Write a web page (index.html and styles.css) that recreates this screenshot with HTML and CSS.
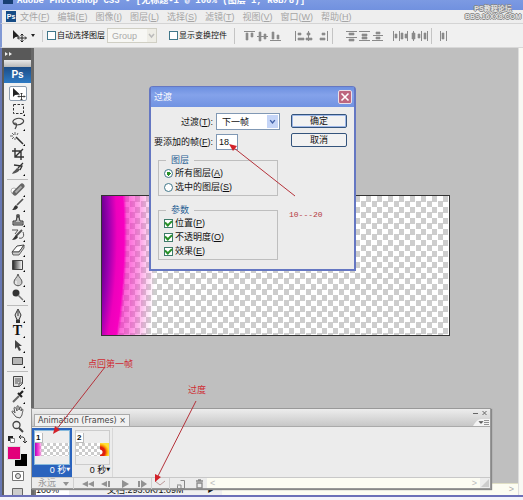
FILE: index.html
```html
<!DOCTYPE html>
<html lang="zh-CN">
<head>
<meta charset="utf-8">
<title>Adobe Photoshop CS3</title>
<link rel="stylesheet" href="styles.css">
</head>
<body>
<div class="app">
  <header class="titlebar"><span class="title-icon"></span><span class="title-text">Adobe Photoshop CS3 - [无标题-1 @ 100% (图层 1, RGB/8)]</span></header>
  <nav class="menubar">
    <span class="ps-small">Ps</span>
    <a href="#">文件(<u>F</u>)</a><a href="#">编辑(<u>E</u>)</a><a href="#">图像(<u>I</u>)</a><a href="#">图层(<u>L</u>)</a><a href="#">选择(<u>S</u>)</a><a href="#">滤镜(<u>T</u>)</a><a href="#">视图(<u>V</u>)</a><a href="#">窗口(<u>W</u>)</a><a href="#">帮助(<u>H</u>)</a>
  </nav>
  <div class="options">
    <svg class="opt-move" viewBox="0 0 24 14"><path d="M1 1v9l2.500-2 4-.5z" fill="#222"/><path d="M10 5v8M6 9h8M8.500 6.500L10 5l1.500 1.500M8.500 11.500L10 13l1.500-1.500M7 7.500L5.500 9 7 10.500M13 7.500L14.500 9 13 10.500" fill="none" stroke="#222"/><path d="M19 5h4l-2 3z" fill="#222"/></svg>
    <label class="opt-check first"><input type="checkbox" class="tick">自动选择图层</label>
    <select class="group-select" aria-label="自动选择" disabled><option>Group</option></select>
    <svg class="group-arrow" viewBox="0 0 9 13"><path d="M2 5l2.500 3L7 5" fill="none" stroke="#bbb" stroke-width="1.500"/></svg>
    <label class="opt-check second"><input type="checkbox" class="tick">显示变换控件</label>
    <svg class="aligns" viewBox="0 0 215 16" fill="none" stroke="#8a8a8a">
      <path d="M1.500 0v16M99.500 0v16M198.500 0v16" stroke="#c4c4c4"/>
      <path d="M11 3.500h11M24 8.500h11M37 12.500h11M62.500 3v10M75.500 3v10M94.500 3v10M113 3.500h11M113 9.500h11M126 3.500h11M126 12.500h11M140 7.500h10M139 12.500h11M160.500 3v10M166.500 3v10M174.500 3v10M180.500 3v10M188.500 3v10M194.500 3v10M207.500 3v10M213.500 3v10"/>
      <path d="M13 5h2v7h-2zM18 5h2v4h-2zM26 4h2v9h-2zM31 6h2v5h-2zM39 4h2v7h-2zM44 7h2v4h-2zM65 5h3v2h-3zM65 10h6v2h-6zM74 5h3v2h-3zM73 10h6v2h-6zM89 5h3v2h-3zM87 10h5v2h-5zM116 5h5v2h-5zM116 11h5v2h-5zM129 6h5v2h-5zM129 9h5v2h-5zM143 4h4v2h-4zM143 9h4v2h-4zM162 6h2v4h-2zM168 5h2v6h-2zM172 6h2v4h-2zM179 5h3v6h-3zM185 6h2v4h-2zM191 5h2v6h-2zM209 5h2v6h-2z" fill="#8a8a8a" stroke-width=".6"/>
    </svg>
  </div>
  <div class="watermark"><span>PS教程论坛</span><span>BBS.16XX8.COM</span></div>

  <main class="workspace">
    <aside class="tools">
      <div class="tools-head"><svg viewBox="0 0 8 6"><path d="M0 1l3 2-3 2zM4 1l3 2-3 2z" fill="#eee"/></svg></div>
      <div class="tools-body">
        <div class="grip"></div>
        <div class="ps-logo">Ps</div>
        <div class="group">
          <button class="tool active" aria-label="移动"><svg viewBox="0 0 16 14"><path d="M3 1v9l2-2 5-.5z" fill="#222"/><path d="M11.500 6v7M8 9.500h7M10.500 7l1-1 1 1M10.500 12l1 1 1-1M9 8.500l-1 1 1 1M14 8.500l1 1-1 1" fill="none" stroke="#222" stroke-width=".8"/></svg></button>
          <button class="tool" aria-label="选框"><svg viewBox="0 0 16 14"><path d="M3.500 2.500h10v9h-10z" fill="none" stroke="#333" stroke-dasharray="2.500 1.500"/><path d="M13 14h2v-2z"/></svg></button>
          <button class="tool" aria-label="套索"><svg viewBox="0 0 16 14"><path d="M4 7C0 3 8 0 12 2c4 2 0 6-5 6-3 0-4-2-2-2s2 3 0 6" fill="none" stroke="#444" stroke-width="1.200"/><path d="M13 14h2v-2z"/></svg></button>
          <button class="tool" aria-label="魔棒"><svg viewBox="0 0 16 14"><path d="M6 5l7 7" stroke="#333" stroke-width="1.600"/><path d="M5 0v3M0 4h3M2 1l2 2M8 1L7 3M2 7l2-2M5 6v2" stroke="#666" fill="none"/><path d="M13 14h2v-2z"/></svg></button>
          <button class="tool" aria-label="裁剪"><svg viewBox="0 0 16 14"><path d="M5 1v9h9M2 4h9v9M5 10l8-8" fill="none" stroke="#333" stroke-width="1.400"/></svg></button>
          <button class="tool" aria-label="切片"><svg viewBox="0 0 16 14"><path d="M2 12c1-3 4-4 5-6l3 1c-1 3-4 4-8 5z" fill="#555"/><path d="M8 6l5-5M4 3l8 1-2 4" fill="none" stroke="#333" stroke-width="1.300"/><path d="M13 14h2v-2z"/></svg></button>
        </div>
        <div class="group">
          <button class="tool" aria-label="修复画笔"><svg viewBox="0 0 16 14"><circle cx="4" cy="8" r="3" fill="#fff" stroke="#999" stroke-width=".7"/><path d="M5 10l7-7" stroke="#666" stroke-width="5" stroke-linecap="round"/><path d="M5.500 9.500l6-6" stroke="#aaa" stroke-width="2"/><path d="M13 14h2v-2z"/></svg></button>
          <button class="tool" aria-label="画笔"><svg viewBox="0 0 16 14"><path d="M7 7l6-6" stroke="#555" stroke-width="1.700"/><path d="M2 12c2-1 1-3 4-5l2 2c-1 3-4 3-6 3z" fill="#333"/><path d="M13 14h2v-2z"/></svg></button>
          <button class="tool" aria-label="图章"><svg viewBox="0 0 16 14"><circle cx="8" cy="3" r="2" fill="#555"/><path d="M7 4h2l1 4h3v4H3V8h3z" fill="#bbb" stroke="#333"/><path d="M4 10h8" stroke="#444"/><path d="M13 14h2v-2z"/></svg></button>
          <button class="tool" aria-label="历史画笔"><svg viewBox="0 0 16 14"><path d="M6 8l6-6" stroke="#555" stroke-width="2"/><path d="M2 12l4-5 2 2c-1 2-3 3-6 3z" fill="#333"/><path d="M2 2h6l-3 4M13 4c2 5-1 7-4 6" fill="none" stroke="#555"/><path d="M13 14h2v-2z"/></svg></button>
          <button class="tool" aria-label="橡皮擦"><svg viewBox="0 0 16 14"><path d="M2 9l5-6 7-1-5 7z" fill="#fff" stroke="#444"/><path d="M2 9l7 0 5-7v3L9 12H3z" fill="#ccc" stroke="#444" stroke-width=".8"/><path d="M13 14h2v-2z"/></svg></button>
          <button class="tool" aria-label="渐变"><svg viewBox="0 0 16 14"><defs><linearGradient id="gr"><stop stop-color="#222"/><stop offset="1" stop-color="#fff"/></linearGradient></defs><path d="M2.500 2.500h10v9h-10z" fill="url(#gr)" stroke="#444"/><path d="M13 14h2v-2z"/></svg></button>
          <button class="tool" aria-label="模糊"><svg viewBox="0 0 16 14"><path d="M8 1c1 4 4 5 4 8 0 5-8 5-8 0 0-3 3-4 4-8z" fill="#ccc" stroke="#555"/><path d="M6 8v3" stroke="#fff"/><path d="M13 14h2v-2z"/></svg></button>
          <button class="tool" aria-label="减淡"><svg viewBox="0 0 16 14"><circle cx="6" cy="5" r="3.500" fill="#333"/><path d="M8 7l5 5" stroke="#777" stroke-width="1.500"/><path d="M13 14h2v-2z"/></svg></button>
        </div>
        <div class="group">
          <button class="tool" aria-label="钢笔"><svg viewBox="0 0 16 14"><path d="M8 0l3 6-2 5H7L5 6z" fill="#ddd" stroke="#333"/><path d="M8 2v5" stroke="#333"/><path d="M6 11h4v3H6z" fill="#333"/><path d="M13 14h2v-2z"/></svg></button>
          <button class="tool type-tool" aria-label="文字"><span>T</span><svg viewBox="0 0 16 14"><path d="M13 14h2v-2z"/></svg></button>
          <button class="tool" aria-label="路径选择"><svg viewBox="0 0 16 14"><path d="M5 1v9l2-2 2 4 2-1-2-4 3 0z" fill="#444"/><path d="M13 14h2v-2z"/></svg></button>
          <button class="tool" aria-label="矩形"><svg viewBox="0 0 16 14"><path d="M2.500 3.500h10v7h-10z" fill="#b5b5b5" stroke="#444"/><path d="M13 14h2v-2z"/></svg></button>
        </div>
        <div class="group last">
          <button class="tool" aria-label="注释"><svg viewBox="0 0 16 14"><path d="M3.500 1.500h9v7l-3 3h-6z" fill="#ddd" stroke="#444"/><path d="M5 4h6M5 6h6M5 8h3M9 12V8h4" fill="none" stroke="#555"/><path d="M13 14h2v-2z"/></svg></button>
          <button class="tool" aria-label="吸管"><svg viewBox="0 0 16 14"><path d="M3 12l6-6" stroke="#666" stroke-width="2"/><path d="M8 3l4 4M9 5l4-4" stroke="#222" stroke-width="2.200"/><path d="M13 14h2v-2z"/></svg></button>
          <button class="tool" aria-label="抓手"><svg viewBox="0 0 16 14"><path d="M6 12L2 7c0-2 2-1 3 1L4 3c1-2 2 0 3 3V1c2-1 2 1 2 4l1-3c2 0 1 2 1 4l1-2c2 0 0 4 0 6l-2 3z" fill="#eee" stroke="#555"/></svg></button>
          <button class="tool" aria-label="缩放"><svg viewBox="0 0 16 14"><circle cx="6.500" cy="5" r="3.500" fill="#eee" stroke="#444" stroke-width="1.300"/><path d="M9 8l4 4" stroke="#444" stroke-width="2"/></svg></button>
        </div>
        <svg class="swatches" viewBox="0 0 22 33"><path d="M2 2h5v5H2z" fill="#222"/><path d="M4.500 4.500h4v4h-4z" fill="#fff" stroke="#888"/><path d="M14 3h3q2 0 2 5M15 1l-2 2 2 2M17 7l2 2 2-2" fill="none" stroke="#333"/><path d="M9 20h12v12H9z" fill="#000"/><path d="M1.500 12.500h13v13h-13z" fill="#e2007a" stroke="#ddd"/></svg>
        <svg class="mask" viewBox="0 0 16 12"><path d="M2.500 1.500h11v9h-11z" fill="#fff" stroke="#777"/><circle cx="8" cy="6" r="2.500" fill="#ddd" stroke="#555"/></svg>
        <svg class="screen" viewBox="0 0 16 8"><path d="M2.500 1.500h10v7h-10z" fill="#ccc" stroke="#666"/></svg>
      </div>
    </aside>
    <section class="stage">
      <div class="canvas"><div class="paint"></div></div>
      <footer class="status"><span class="zoom">100%</span><span class="docsize">文档:293.0K/1.09M</span><span class="play">▶</span><span class="hscroll">&gt;</span></footer>
    </section>
    <div class="vscroll"></div>
  </main>
  <div class="base"></div>

  <form class="dialog">
    <div class="dialog-title"><span>过渡</span><button type="button" class="close" aria-label="关闭"><svg viewBox="0 0 12 12"><path d="M2.500 2.500l7 7M9.500 2.500l-7 7" stroke="#fff" stroke-width="1.600"/></svg></button></div>
    <div class="dialog-body">
      <div class="fields">
        <div class="row"><label for="tween">过渡(<u>T</u>):</label><span class="select-wrap"><select id="tween"><option>下一帧</option></select><svg viewBox="0 0 11 14"><path d="M3 5.500l2.500 3 2.500-3" fill="none" stroke="#4161a8" stroke-width="1.500"/></svg></span></div>
        <div class="row"><label for="count">要添加的帧(<u>F</u>):</label><input id="count" type="text" value="18"></div>
        <fieldset class="layers"><legend>图层</legend>
          <label><input type="radio" name="layer" checked><span>所有图层(<u>A</u>)</span></label>
          <label><input type="radio" name="layer"><span>选中的图层(<u>S</u>)</span></label>
        </fieldset>
        <fieldset class="params"><legend>参数</legend>
          <label><input type="checkbox" class="tick" checked><span>位置(<u>P</u>)</span></label>
          <label><input type="checkbox" class="tick" checked><span>不透明度(<u>O</u>)</span></label>
          <label><input type="checkbox" class="tick" checked><span>效果(<u>E</u>)</span></label>
        </fieldset>
      </div>
      <div class="actions"><button type="button" class="ok">确定</button><button type="button">取消</button></div>
    </div>
  </form>

  <section class="panel">
    <div class="panel-head">
      <div class="tab">Animation (Frames) <span>×</span></div>
      <svg class="panel-ctl" viewBox="0 0 20 18"><path d="M3 5.500h5M12.500 3l4 4M16.500 3l-4 4" stroke="#666" fill="none"/><path d="M3 18q4-7 8-7h9v7z" fill="#f4f4f4"/><path d="M9 13.500h4l-2 2zM14 12.500h5M14 14.500h5M14 16.500h5" stroke="#666" stroke-width=".7" fill="#444"/></svg>
    </div>
    <div class="frames">
      <div class="frame selected"><div class="thumb"><b>1</b><div class="strip pink"></div></div><div class="delay">0 秒<i>▼</i></div></div>
      <div class="frame"><div class="thumb"><b>2</b><div class="strip fire"></div></div><div class="delay">0 秒<i>▼</i></div></div>
    </div>
    <div class="controls">
      <span class="loop">永远</span>
      <svg class="transport" viewBox="0 0 145 11" fill="#929292"><path d="M1 4h6l-3 4zM20 6l6-3v6zM26 6l6-3v6zM39 6l6-3v6zM46 3h2v6h-2zM60 2l7 4-7 4zM76 3h2v6h-2zM79 2l6 4-6 4z"/><path d="M11.500 0v11M89.500 0v11M107.500 0v11" stroke="#d0d0d0"/><path d="M93 3l5 4 5-4" stroke="#b99" fill="none"/><path d="M115.500 7.500v3h7v-8h-4M115 7h4v3" fill="none" stroke="#888"/><path d="M134 3h7M136 2h3M135 5h5v5h-5z" fill="none" stroke="#888" stroke-width="1.300"/></svg>
      <div class="track"><span>&lt;</span><span>&gt;</span></div>
      <svg class="resize" viewBox="0 0 10 10"><path d="M1 9l8-8v8z" fill="#ccc"/></svg>
    </div>
  </section>

  <svg class="arrows" viewBox="0 0 523 500" fill="#d3222a" stroke="#b5323a"><path d="M105 367L56 430M196 401L158 476M295 196L234 148" fill="none"/><path d="M53 434l2-8 5 4zM155 482l0-8 6 3zM229 144l8 2-4 5z" stroke="none"/></svg>
  <span class="note note-range">10---20</span>
  <span class="note note-first">点回第一帧</span>
  <span class="note note-tween">过度</span>
</div>
</body>
</html>
```
FILE: styles.css
```css
* { box-sizing: border-box; }
body { margin: 0; font: 9px/12px "Liberation Sans", "Noto Sans CJK SC", sans-serif; color: #111; }
button, input, select { font: inherit; color: inherit; margin: 0; padding: 0; }
svg { display: block; }
.app { position: relative; display: flex; flex-direction: column; height: 100vh; overflow: hidden; background: #ededed; }

.titlebar { display: flex; height: 10px; flex: none; overflow: hidden; background: linear-gradient(#7c9ae2, #7191df); color: #fff; padding-left: 3px; gap: 4px; }
.title-icon { width: 10px; height: 4px; background: #173f74; }
.title-text { font: bold 9px/12px "Liberation Mono", "Noto Sans CJK SC", monospace; margin-top: -5px; white-space: nowrap; }
.menubar { display: flex; align-items: center; gap: 8px; flex: none; height: 14px; padding-left: 4px; border-left: 2px solid #8199d5; border-bottom: 1px solid #d4d4d4; background: #eee; }
.menubar a { color: #a5a5a5; text-decoration: none; white-space: nowrap; }
.ps-small { width: 10px; height: 11px; margin-right: -4px; background: #164c86; color: #fff; font: bold 7px/11px "Liberation Sans", sans-serif; text-align: center; }
.options { display: flex; align-items: center; flex: none; height: 24px; padding-left: 10px; border-left: 2px solid #8199d5; background: #f0f0f0; border-bottom: 1px solid #d8d8d8; font-size: 8px; }
.opt-move { width: 24px; height: 14px; }
.opt-check { display: flex; align-items: center; gap: 1px; white-space: nowrap; }
.first { margin-left: 6px; padding-left: 4px; border-left: 1px solid #ccc; }
.group-select { appearance: none; width: 50px; height: 15px; margin: 0 0 0 2px; padding-left: 4px; border: 1px solid #d0cfc4; background: #f7f7f4; color: #aaa; font-size: 9px; opacity: 1; }
.group-arrow { width: 9px; height: 13px; margin-left: -10px; background: #eeede6; }
.second { padding-left: 13px; }
.aligns { width: 215px; height: 16px; margin-left: 6px; }
.tick { appearance: none; width: 9px; height: 9px; border: 1px solid #40778a; background: #fff; display: grid; place-items: center; flex: none; }
.tick:checked { border-color: #3d7a6a; }
.tick:checked::after { content: ""; width: 5px; height: 3px; border-left: 2px solid #289028; border-bottom: 2px solid #289028; transform: rotate(-45deg); margin-bottom: 1px; }
.watermark { position: absolute; right: 2px; top: 5px; display: flex; flex-direction: column; align-items: center; font: bold 7px/8px "Liberation Sans", "Noto Sans CJK SC", sans-serif; color: #e4e4e4; text-shadow: 1px 0 #888, -1px 0 #888, 0 1px #888, 0 -1px #888; }

.workspace { display: flex; flex: 1; min-height: 0; background: #bfbfbf; }
.tools { width: 34px; flex: none; display: flex; flex-direction: column; border-left: 2px solid #6878b4; border-right: 3px solid #686868; background: #5b5b5b; overflow: hidden; }
.tools-head { flex: none; height: 12px; padding: 3px; background: #595959; }
.tools-head svg { width: 8px; height: 6px; }
.tools-body { flex: 1; margin-left: 2px; background: #f0f0f0; min-height: 0; }
.grip { height: 7px; background: linear-gradient(#e8e8e8, #b8b8b8); }
.ps-logo { height: 16px; margin-bottom: 3px; background: linear-gradient(#1c4c86, #2d7ac4); color: #fff; font: bold 10px/16px "Liberation Sans", sans-serif; text-align: center; }
.group { display: flex; flex-direction: column; align-items: center; padding-bottom: 3px; margin: 0 3px 2px; border-bottom: 1px solid #bbb; }
.last { padding: 0; margin-bottom: 0; border: 0; }
.tool { display: grid; place-items: center; width: 18px; height: 15px; border: 0; background: none; }
.tool svg { width: 16px; height: 14px; }
.tool.active { border: 1px solid #8c9cae; border-radius: 2px; background: #fff; }
.type-tool { font: bold 14px/14px "Liberation Serif", serif; }
.type-tool svg, .type-tool span { grid-area: 1 / 1; }
.swatches { width: 22px; height: 33px; margin-left: 2px; }
.mask { width: 16px; height: 12px; margin: 3px auto 5px; }
.screen { width: 16px; height: 8px; margin: 0 auto; }
.stage { flex: 1; min-width: 0; display: flex; flex-direction: column; }
.canvas { height: 141px; margin: 147px 68px auto 67px; border: 1px solid #333; background: conic-gradient(#fff 25%, #cdcdcd 0 50%, #fff 0 75%, #cdcdcd 0) 0 0 / 11px 11px; }
.paint { width: 54px; height: 100%; background: radial-gradient(ellipse 100px 300px at -50px 40px, #66008c 50%, #9c00b0 57%, #ee00bc 65%, #f800c0 72%, rgba(250, 20, 195, .65) 75%, rgba(255, 60, 205, .5) 87%, rgba(255, 110, 215, .3) 96%, transparent 104%); }
.status { display: flex; align-items: end; flex: none; height: 12px; background: #efefef; white-space: nowrap; line-height: 9px; }
.zoom { width: 35px; background: #fff; border-left: 2px solid #777; }
.docsize { margin-left: 38px; }
.play { margin-left: 24px; font-size: 6px; }
.hscroll { flex: 1; height: 12px; margin-left: 8px; padding-right: 4px; background: #fcfcf2; border-top: 1px solid #e0dfc5; color: #aaa; line-height: 11px; text-align: right; }
.vscroll { width: 5px; background: #f8f8f3; border-left: 1px solid #ddd; }
.base { flex: none; height: 5px; border-top: 2px solid #6c70b8; background: #f3f3fa; }

.dialog { position: absolute; left: 149px; top: 86px; width: 207px; border: 2px solid #6577c2; border-top-width: 1px; border-radius: 4px 4px 0 0; background: #ececec; }
.dialog-title { display: flex; align-items: center; justify-content: space-between; height: 20px; padding: 0 2px 0 3px; background: linear-gradient(#6d90e0, #84a2ea 40%, #7193e2); color: #fff; }
.close { width: 14px; height: 14px; border: 1px solid #eadfe8; border-radius: 2px; background: #bd667f; }
.close svg { width: 12px; height: 12px; }
.dialog-body { display: flex; justify-content: space-between; padding: 6px 7px 9px; }
.fields { width: 122px; }
.row { display: flex; align-items: center; justify-content: flex-end; gap: 3px; margin-bottom: 4px; white-space: nowrap; }
.select-wrap { position: relative; width: 64px; }
.select-wrap select { appearance: none; display: block; width: 100%; height: 17px; padding-left: 5px; border: 1px solid #8098b4; border-radius: 0; background: #fff; }
.select-wrap svg { position: absolute; right: 2px; top: 2px; width: 11px; height: 13px; background: #c5d5f7; pointer-events: none; }
.row input { width: 22px; height: 16px; margin-right: 42px; padding-left: 2px; border: 1px solid #8098b4; background: #fff; }
fieldset { width: 120px; min-width: 0; margin: 4px 0 0; padding: 0 5px 1px; border: 1px solid #bebebe; }
legend { padding: 0 5px; margin-left: 2px; color: #285f93; }
fieldset label { display: flex; align-items: center; gap: 2px; height: 14px; }
.params { margin-top: 8px; }
input[type="radio"] { appearance: none; width: 9px; height: 9px; border: 1px solid #40778a; border-radius: 50%; background: #fff; }
input[type="radio"]:checked { background: radial-gradient(circle, #289028 0 2px, #fff 2px); }
.actions { display: flex; flex-direction: column; gap: 5px; width: 56px; margin: 1px 0 0; }
.actions button { height: 14px; border: 1px solid #34547c; border-radius: 2px; background: #f2f2f2; line-height: 11px; }
.actions .ok { box-shadow: inset 0 0 0 1px #9fb8e8; }

.panel { position: absolute; left: 31px; right: 32px; top: 408px; border: 1px solid #999; background: #ececec; box-shadow: 1px 1px 1px #888; }
.panel-head { display: flex; align-items: end; justify-content: space-between; height: 18px; background: linear-gradient(#ededed, #c7c7c7); border-bottom: 1px solid #aaa; }
.tab { height: 12px; margin-left: 2px; padding: 0 3px; border: 1px solid #aaa; border-bottom: 0; background: #f1f1f1; color: #444; font: 8px/12px "DejaVu Sans", sans-serif; white-space: nowrap; }
.panel-ctl { width: 20px; height: 18px; }
.frames { display: flex; gap: 1px; height: 50px; padding-top: 1px; }
.frame { width: 40px; padding: 2px; border-right: 1px solid #d8d8d8; }
.frame.selected { background: #2a63bd; color: #fff; border: 0; }
.thumb { height: 35px; padding: 2px 0 0; border: 1px solid #ccc; background: #ededed; }
.selected .thumb { border-color: #8abbdc; color: #111; }
.thumb b { display: block; width: 8px; height: 10px; border-right: 1px solid #bbb; border-bottom: 1px solid #bbb; background: #fff; font-size: 8px; line-height: 9px; padding-left: 1px; }
.strip { height: 13px; background: conic-gradient(#fff 25%, #ccc 0 50%, #fff 0 75%, #ccc 0) 0 0 / 6px 6px; }
.strip::after { content: ""; display: block; height: 100%; }
.pink::after { background: linear-gradient(90deg, #b900bc, #ff50d8 4px, transparent 7px); }
.fire::after { width: 9px; margin-left: auto; background: radial-gradient(circle at 0 70%, #fff 0 2px, #df2010 3px 5px, #ff9c00 7px, #ffe135 9px); }
.delay { text-align: right; line-height: 11px; white-space: nowrap; }
.delay i { font: 5px/8px "DejaVu Sans", sans-serif; vertical-align: 2px; }
.controls { display: flex; align-items: center; height: 11px; border-top: 1px solid #c8c8c8; color: #999; }
.loop { width: 18px; margin-left: 6px; line-height: 10px; white-space: nowrap; }
.transport { width: 145px; height: 11px; margin-left: 6px; flex: none; }
.track { display: flex; justify-content: space-between; flex: 1; height: 10px; line-height: 10px; padding: 0 3px; background: #fcfcf3; color: #bbb; }
.resize { width: 10px; height: 10px; }

.arrows { position: absolute; left: 0; top: 0; width: 523px; height: 500px; pointer-events: none; }
.note { position: absolute; color: #cf2b32; white-space: nowrap; }
.note-range { left: 289px; top: 209px; font: 8px/12px "Liberation Mono", monospace; color: #b43a42; }
.note-first { left: 88px; top: 358px; }
.note-tween { left: 188px; top: 384px; }
```
